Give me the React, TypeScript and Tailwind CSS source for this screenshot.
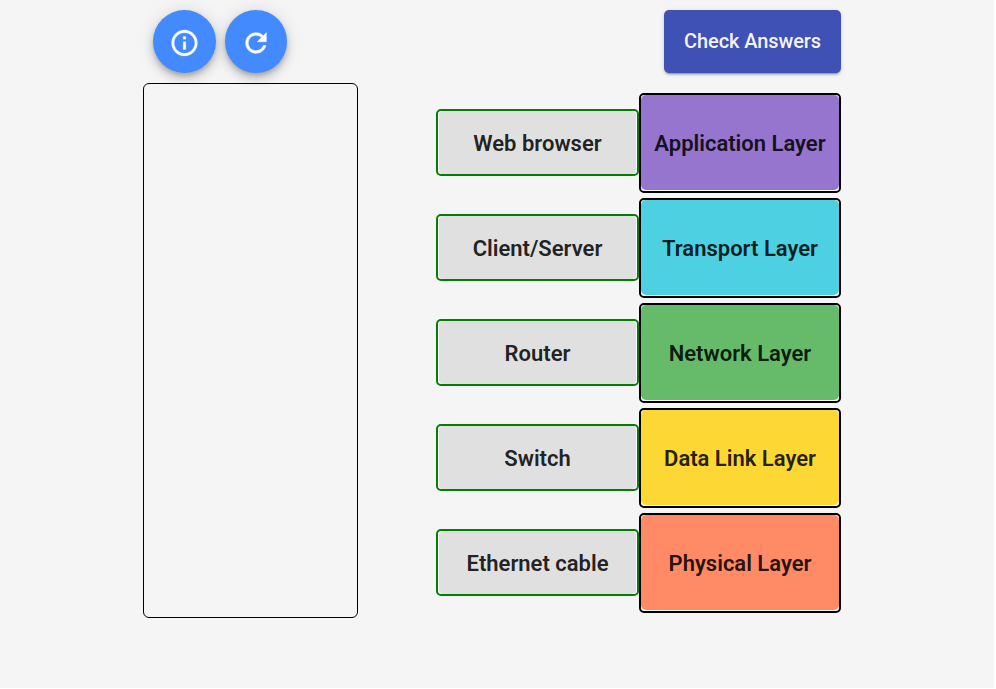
const rows = [
  { answer: "Web browser", layer: "Application Layer", color: "bg-[#9575cd]" },
  { answer: "Client/Server", layer: "Transport Layer", color: "bg-[#4dd0e1]" },
  { answer: "Router", layer: "Network Layer", color: "bg-[#66bb6a]" },
  { answer: "Switch", layer: "Data Link Layer", color: "bg-[#fdd835]" },
  { answer: "Ethernet cable", layer: "Physical Layer", color: "bg-[#ff8a65]" },
];

const fab =
  "flex h-[63px] items-center justify-center rounded-full bg-[#448aff] text-white shadow-[0_3px_5px_-1px_rgba(0,0,0,0.2),0_6px_10px_0_rgba(0,0,0,0.14),0_1px_18px_0_rgba(0,0,0,0.12)]";

export default function App() {
  return (
    <div className="h-[689px] w-[996px] overflow-hidden bg-white font-[Roboto,sans-serif]">
      <div className="flex h-[688px] w-[994px] justify-between bg-[#f5f5f5] pt-[10px] pr-[153px] pl-[143px]">
        <div className="flex flex-col gap-[10px]">
          <div className="flex gap-[9px] pl-[10px]">
            <button className={`${fab} w-[63px]`} aria-label="Information">
              <svg viewBox="0 0 24 24" className="mt-[3px] h-[32px] w-[31px]" fill="currentColor" stroke="currentColor" strokeWidth="0.2">
                <path d="M11 17h2v-6h-2v6zm1-15C6.48 2 2 6.48 2 12s4.48 10 10 10 10-4.480 10-10S17.520 2 12 2zm0 18c-4.410 0-8-3.590-8-8s3.590-8 8-8 8 3.590 8 8-3.590 8-8 8zM11 9h2V7h-2v2z" />
              </svg>
            </button>
            <button className={`${fab} w-[62px]`} aria-label="Reset">
              <svg viewBox="-0.4 -0.4 24.8 24.8" className="mt-[3px] size-[32px]" fill="currentColor" stroke="currentColor" strokeWidth="0.4">
                <path d="M17.650 6.350C16.200 4.900 14.210 4 12 4c-4.420 0-7.990 3.580-7.990 8s3.570 8 7.990 8c3.730 0 6.840-2.550 7.730-6h-2.080c-.82 2.330-3.040 4-5.650 4-3.310 0-6-2.690-6-6s2.690-6 6-6c1.660 0 3.140.69 4.220 1.780L13 11h7V4l-2.350 2.350z" />
              </svg>
            </button>
          </div>
          <div className="h-[535px] w-[215px] rounded-[6px] border border-black" />
        </div>
        <div className="flex w-[405px] flex-col">
          <button className="h-[63px] w-[177px] self-end rounded-[5px] bg-[#3f51b5] pb-[2px] text-[20px] font-medium tracking-[-0.1px] text-white/95 shadow-[0_3px_1px_-2px_rgba(0,0,0,0.2),0_2px_2px_0_rgba(0,0,0,0.14),0_1px_5px_0_rgba(0,0,0,0.12)]">
            Check Answers
          </button>
          <div className="mt-[20px] flex flex-col gap-[5px]">
            {rows.map((row) => (
              <div key={row.layer} className="flex h-[100px] text-[22px] font-semibold text-black/87">
                <div className="mt-4 flex h-[67px] w-[203px] rounded-[5px] border-2 border-[#008000] bg-white px-px">
                  <div className="flex flex-1 items-center justify-center rounded-[4px] bg-[#e0e0e0] pt-px">{row.answer}</div>
                </div>
                <div className="flex w-[202px] rounded-[5px] border-2 border-black bg-white pb-px">
                  <div className={`flex flex-1 items-center justify-center rounded-[5px] pt-px ${row.color}`}>{row.layer}</div>
                </div>
              </div>
            ))}
          </div>
        </div>
      </div>
    </div>
  );
}
